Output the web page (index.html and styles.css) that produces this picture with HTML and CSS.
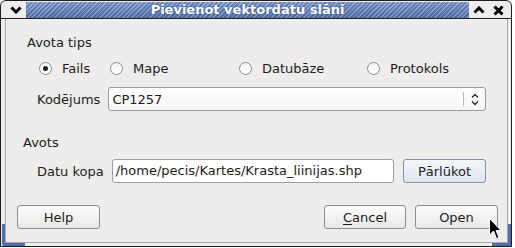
FILE: index.html
```html
<!DOCTYPE html>
<html lang="lv">
<head>
  <meta charset="UTF-8">
  <title>Pievienot vektordatu slāni</title>
  <link rel="stylesheet" href="styles.css">
</head>
<body>

<div class="window">
  <div class="titlebar">
    <div class="tb-btn tb-menu">
      <svg width="12" height="8" viewBox="0 0 12 8"><polyline points="1.5,1.5 6,6 10.5,1.5"/></svg>
    </div>
    <div class="title">Pievienot vektordatu slāni</div>
    <div class="tb-btn">
      <svg width="12" height="8" viewBox="0 0 12 8"><polyline points="1.5,6.5 6,2 10.5,6.5"/></svg>
    </div>
    <div class="tb-btn tb-close">
      <svg width="11" height="11" viewBox="0 0 11 11"><path d="M1.5 1.5 L9.5 9.5 M9.5 1.5 L1.5 9.5"/></svg>
    </div>
  </div>

  <div class="frame">
    <div class="client">
      <div class="group-title">Avota tips</div>
      <div class="radios">
        <label class="radio"><span class="dot checked"></span>Fails</label>
        <label class="radio"><span class="dot"></span>Mape</label>
        <label class="radio"><span class="dot"></span>Datubāze</label>
        <label class="radio"><span class="dot"></span>Protokols</label>
      </div>
      <div class="field field-enc">
        <span class="field-label">Kodējums</span>
        <div class="combo">
          <span class="combo-text">CP1257</span>
          <span class="combo-sep"></span>
          <svg class="combo-arrows" width="8" height="13" viewBox="0 0 8 13">
            <polyline points="1,4.5 4,1.5 7,4.5"/>
            <polyline points="1,8.5 4,11.5 7,8.5"/>
          </svg>
        </div>
      </div>

      <div class="group-title group-src">Avots</div>
      <div class="field field-src">
        <span class="field-label">Datu kopa</span>
        <div class="input">/home/pecis/Kartes/Krasta_liinijas.shp</div>
        <button class="btn btn-focus">Pārlūkot</button>
      </div>

      <div class="buttons">
        <button class="btn">Help</button>
        <span class="spacer"></span>
        <button class="btn"><u>C</u>ancel</button>
        <button class="btn">Open</button>
      </div>
    </div>
  </div>

  <span class="grip grip-left"></span>
  <span class="grip grip-right"></span>

  <svg class="cursor" width="13" height="22" viewBox="0 0 13 22">
    <path d="M0.5 0.5 L0.5 17 L4.5 13 L7.5 20.5 L10 19.5 L7 12.5 L12 12.5 Z"/>
  </svg>
</div>

</body>
</html>
```

FILE: styles.css
```css
body {
  margin: 0;
  background: #fff;
  font-family: "DejaVu Sans", sans-serif;
  font-size: 13px;
  color: #1c1c1c;
}
.window {
  position: relative;
  width: 510px;
  height: 245px;
  border: 1px solid #1e1e1e;
  border-radius: 6px 6px 0 0;
  background: #eeedeb;
  display: flex;
  flex-direction: column;
}
.titlebar {
  display: flex;
  height: 16px;
  padding: 1px 3px 0 4px;
  border-bottom: 1px solid #222;
}
.tb-btn {
  width: 20px;
  display: flex;
  align-items: center;
  justify-content: center;
}
.tb-menu {
  width: 21px;
}
.tb-close {
  width: 19px;
}
.tb-btn svg polyline,
.tb-btn svg path {
  fill: none;
  stroke: #000;
  stroke-width: 3;
}
.title {
  flex: 1;
  text-align: center;
  color: #fff;
  font-weight: bold;
  line-height: 16px;
  text-shadow: 0 0 2px #2a4680;
  background:
    linear-gradient(rgba(255,255,255,0.15), rgba(0,0,0,0.12)),
    repeating-linear-gradient(135deg, #5574b2 0 2px, #8ca5d8 2px 3.2px);
}
.frame {
  flex: 1;
  display: flex;
  padding: 0 3px 3px 4px;
}
.client {
  flex: 1;
  border: 1px solid #a8a8a6;
  border-top: none;
}
.group-title {
  line-height: 15px;
  margin: 16px 0 0 21px;
}
.group-src {
  margin: 24px 0 0 17px;
}
.radios {
  display: grid;
  grid-template-columns: 71px 129px 128px 1fr;
  height: 22px;
  margin-top: 7px;
  padding-left: 33px;
  align-items: center;
}
.radio {
  display: flex;
  align-items: center;
}
.dot {
  width: 11px;
  height: 11px;
  border: 1px solid #8c8c8a;
  border-radius: 50%;
  background: linear-gradient(#f4f4f3, #ffffff);
  margin-right: 10px;
  display: flex;
  align-items: center;
  justify-content: center;
}
.dot.checked::after {
  content: "";
  width: 5px;
  height: 5px;
  border-radius: 50%;
  background: #232323;
}
.field {
  display: flex;
  align-items: center;
  gap: 8px;
  height: 24px;
  padding: 0 21px 0 31px;
}
.field-enc {
  margin-top: 8px;
}
.field-src {
  margin-top: 9px;
}
.combo {
  flex: 1;
  height: 22px;
  display: flex;
  align-items: center;
  border: 1px solid #9b9b99;
  border-radius: 3px;
  background: linear-gradient(#ffffff, #f6f6f5);
}
.combo-text {
  flex: 1;
  padding-left: 3px;
}
.combo-sep {
  width: 1px;
  height: 14px;
  background: #b8b8b6;
}
.combo-arrows {
  margin: 0 6px 0 7px;
}
.combo-arrows polyline {
  fill: none;
  stroke: #222;
  stroke-width: 1.3;
}
.input {
  flex: 1;
  height: 22px;
  line-height: 22px;
  padding-left: 3px;
  border: 1px solid #9d9d9b;
  border-radius: 3px;
  background: #fff;
}
.btn {
  width: 83px;
  height: 24px;
  padding: 0;
  font: inherit;
  color: inherit;
  border: 1px solid #8e8e8c;
  border-radius: 3px;
  background: linear-gradient(#fdfdfd, #e9e8e6);
}
.btn u {
  text-decoration-thickness: 1px;
  text-underline-offset: 2px;
}
.btn-focus {
  margin-left: 1px;
  border-color: #7a92b8;
  background: linear-gradient(#f4f7fb, #dfe5ee);
}
.buttons {
  display: flex;
  gap: 9px;
  height: 24px;
  margin-top: 22px;
  padding: 0 9px 0 11px;
}
.buttons .btn:nth-child(3) {
  width: 82px;
}
.spacer {
  flex: 1;
}
.grip {
  position: absolute;
  bottom: 0;
  width: 20px;
  height: 19px;
  border-bottom: 3px solid #4f6eb0;
}
.grip-left {
  left: 1px;
  border-left: 3px solid #4f6eb0;
  border-bottom-left-radius: 3px;
}
.grip-right {
  right: 0;
  width: 16px;
  border-right: 3px solid #4f6eb0;
}
.cursor {
  position: absolute;
  left: 488px;
  top: 217px;
}
.cursor path {
  fill: #000;
  stroke: #fff;
  stroke-width: 1;
}
```
